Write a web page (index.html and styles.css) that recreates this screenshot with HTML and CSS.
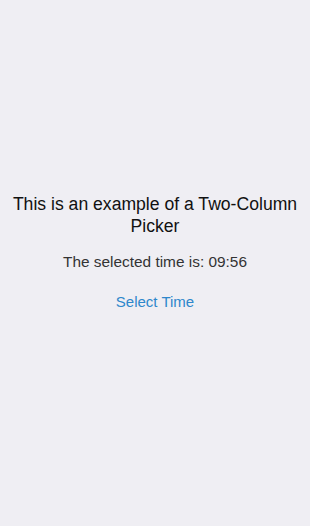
FILE: index.html
```html
<!DOCTYPE html>
<html lang="en">
<head>
  <meta charset="UTF-8" />
  <title>Two-Column Picker</title>
  <link rel="stylesheet" href="styles.css">
</head>
<body>

<div class="screen">
  <div class="content">
    <h1 class="title">This is an example of a Two-Column Picker</h1>
    <p class="selected">The selected time is: 09:56</p>
    <button class="select-btn">Select Time</button>
  </div>
</div>

</body>
</html>
```

FILE: styles.css
```css
body {
  font-family: "Liberation Sans", Arial, sans-serif;
  margin: 0;
  background: #efeef3;
}
.screen {
  height: 526px;
  display: flex;
  align-items: center;
  justify-content: center;
}
.content {
  display: flex;
  flex-direction: column;
  align-items: center;
  text-align: center;
  padding: 0 10px;
  margin-bottom: 22px;
}
.title {
  margin: 0;
  font-size: 17.6px;
  font-weight: normal;
  line-height: 22px;
  color: #111;
}
.selected {
  margin: 15px 0 0;
  font-size: 15.4px;
  line-height: 20px;
  color: #333;
}
.select-btn {
  margin-top: 20px;
  padding: 0;
  border: none;
  background: none;
  font-family: inherit;
  font-size: 15px;
  line-height: 20px;
  color: #2e87cb;
  cursor: pointer;
}
```
